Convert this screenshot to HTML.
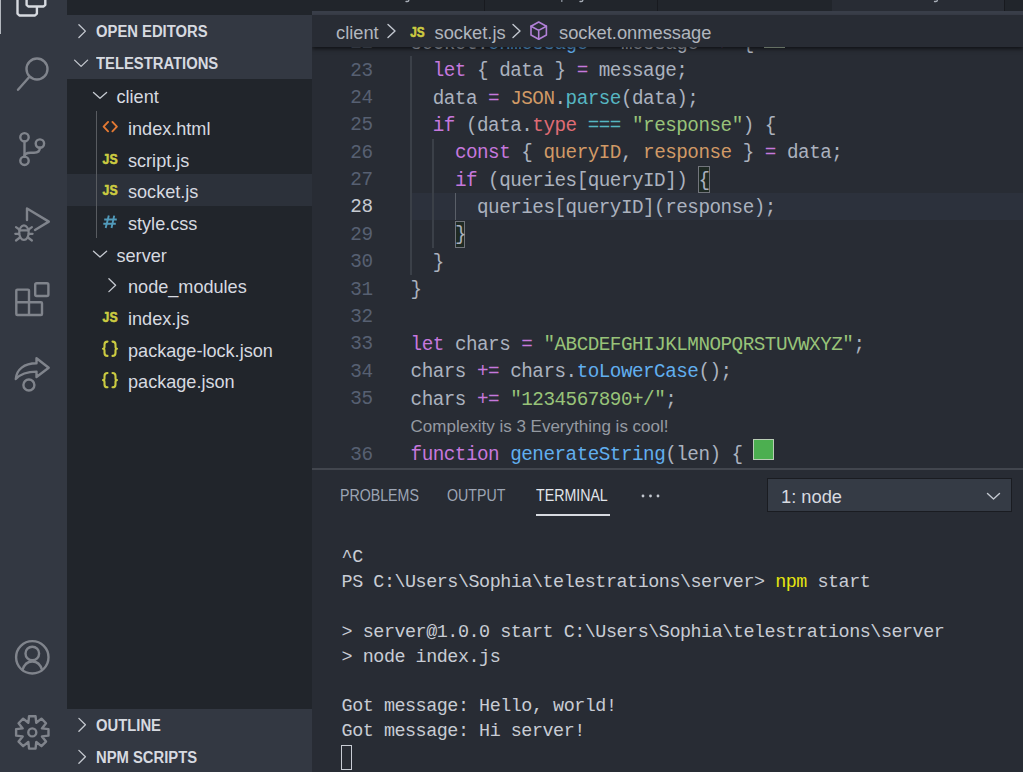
<!DOCTYPE html>
<html><head><meta charset="utf-8">
<style>
*{margin:0;padding:0;box-sizing:border-box}
html,body{width:1023px;height:772px;overflow:hidden;background:#282c34}
body{position:relative;font-family:"Liberation Sans",sans-serif}
.abs{position:absolute}
svg{position:absolute;overflow:visible}
#act{left:0;top:0;width:67px;height:772px;background:#333842}
#side{left:67px;top:0;width:245px;height:772px;background:#21252b}
.hdr{position:absolute;left:0;width:245px;height:32px;background:#333842;color:#d7dae0;font-weight:700;font-size:16px;line-height:32px;white-space:pre}
.hdr .t{position:absolute;left:29px;top:1.4px;transform:scaleX(0.925);transform-origin:0 50%}
.row{position:absolute;left:0;width:245px;height:32px;color:#d7dae0;font-size:18.1px;line-height:32px;white-space:pre}
.row .t{position:absolute;top:1.5px}
#editor{left:312px;top:0;width:711px;height:469px;background:#282c34;overflow:hidden}
#tabs{left:0;top:0;width:711px;height:11px;background:#21252b}
#crumb{left:0;top:15px;width:711px;height:32px;background:#282c34;color:#b1b6be;font-size:18.3px;line-height:32px;white-space:pre;box-shadow:0 2px 4px rgba(0,0,0,.6)}
#crumb span{position:absolute;top:1.8px}
.code{position:absolute;left:0;width:711px;height:27.37px;font-family:"Liberation Mono",monospace;font-size:19.3px;letter-spacing:-0.502px;line-height:27.37px;white-space:pre;color:#abb2bf}
.ln{position:absolute;right:650.5px;text-align:right;color:#576072}
.tx{position:absolute;left:98.6px;top:0.6px}
.lens{position:absolute;left:98.6px;font-size:17px;line-height:27.36px;color:#959aa2;white-space:pre}
.k{color:#c678dd}.s{color:#98c379}.o{color:#d19a66}.c{color:#56b6c2}.r{color:#e06c75}.f{color:#61afef}
.sq{position:absolute;width:20.5px;height:20.5px;background:#4caf50;border:1px solid #b9cdb5;top:-2.9px}
.bm{}
.guide{position:absolute;width:1px;background:#3b4048}
#panel{left:312px;top:468px;width:711px;height:304px;background:#282c34;border-top:2px solid #42464e}
.ptab{position:absolute;top:0;font-size:16.5px;line-height:51px;color:#9da5b4;white-space:pre;transform:scaleX(0.86);transform-origin:0 50%}
.term{position:absolute;left:29.6px;font-family:"Liberation Mono",monospace;font-size:18.4px;letter-spacing:-0.462px;line-height:24.9px;white-space:pre;color:#c8ccd4}
</style></head><body>
<div id="act" class="abs">
  <div class="abs" style="left:0;top:0;width:1px;height:34px;background:#b3b7be"></div>
  <svg width="67" height="772" style="left:0;top:0" fill="none" stroke-linejoin="round" stroke-linecap="round">
    <g stroke="#d7dae0" stroke-width="2.4">
      <path d="M17.5,-8 V13.6 L19.4,15.5 H35 L36.9,13.6 V7.5"/>
      <path d="M26.6,-8 V4.8 L28.3,6.5 H43.6 L45.3,4.8 V-8"/>
    </g>
    <g stroke="#80848c" stroke-width="2.4">
      <circle cx="37" cy="69" r="10.5"/>
      <path d="M29.5,76.8 L18,89.8"/>
      <circle cx="24.5" cy="137.3" r="4.2"/>
      <circle cx="39.9" cy="143.6" r="4.2"/>
      <circle cx="24.5" cy="160.8" r="4.2"/>
      <path d="M24.5,141.5 V156.6"/>
      <path d="M39.9,147.8 C39.9,151.5 37.5,152.8 34,152.8 H30.5 C26.5,152.8 24.5,154 24.5,156.6"/>
      <path d="M27,220 V208.5 L48.8,221.6 L35,230"/>
      <ellipse cx="23.95" cy="232.65" rx="4.7" ry="7.3" stroke-width="2.2"/>
      <path stroke-width="2.2" d="M19.3,230.3 H28.6 M16,227.2 L19.3,229.5 M31.9,227.2 L28.6,229.5 M15.3,233.8 H19.2 M32.6,233.8 H28.7 M16,240.5 L19.3,238 M31.9,240.5 L28.6,238"/>
      <path d="M16.3,290.5 Q16.3,289.6 17.3,289.6 H28 Q29,289.6 29,290.5 V302.3 H41 Q42,302.3 42,303.3 V314 Q42,315 41,315 H17.3 Q16.3,315 16.3,314 Z M16.3,302.3 H29 V315"/>
      <rect x="35.2" y="283.2" width="13.2" height="12.8" rx="1.5"/>
      <path d="M15.8,379 C16.5,369.5 24,363.3 36.5,363.3 V358.2 L48.7,367.8 L36.5,377 V371.6 C27,371.6 20.5,373.8 15.8,379 Z"/>
      <circle cx="28.9" cy="385" r="5.5"/>
      <circle cx="32.3" cy="657.3" r="16.2"/>
      <circle cx="32.3" cy="653.5" r="6.8"/>
      <path d="M22.5,670 Q25,661.5 32.3,661.5 Q39.6,661.5 42.1,670"/>
    </g>
    <g transform="translate(32.3,732.4)" stroke="#80848c" stroke-width="2.4">
      <path d="M-3.23,-16.18 L3.23,-16.18 L3.98,-9.61 L9.15,-13.73 L13.73,-9.15 L9.61,-3.98 L16.18,-3.23 L16.18,3.23 L9.61,3.98 L13.73,9.15 L9.15,13.73 L3.98,9.61 L3.23,16.18 L-3.23,16.18 L-3.98,9.61 L-9.15,13.73 L-13.73,9.15 L-9.61,3.98 L-16.18,3.23 L-16.18,-3.23 L-9.61,-3.98 L-13.73,-9.15 L-9.15,-13.73 L-3.98,-9.61 Z"/>
      <circle cx="0" cy="0" r="4"/>
    </g>
  </svg>
</div>
<div id="side" class="abs">
  <div class="hdr" style="top:15px"><span class="t">OPEN EDITORS</span></div>
  <div class="hdr" style="top:47px"><span class="t">TELESTRATIONS</span></div>
  <div class="row" style="top:79px"><span class="t" style="left:49.5px">client</span></div>
  <div class="row" style="top:111px"><span class="t" style="left:61px">index.html</span></div>
  <div class="row" style="top:143px"><span class="t" style="left:61px">script.js</span></div>
  <div class="row" style="top:174px;background:#2c313a"><span class="t" style="left:61px">socket.js</span></div>
  <div class="row" style="top:206px"><span class="t" style="left:61px">style.css</span></div>
  <div class="row" style="top:238px"><span class="t" style="left:49.5px">server</span></div>
  <div class="row" style="top:269px"><span class="t" style="left:61px">node_modules</span></div>
  <div class="row" style="top:301px"><span class="t" style="left:61px">index.js</span></div>
  <div class="row" style="top:333px"><span class="t" style="left:61px">package-lock.json</span></div>
  <div class="row" style="top:364px"><span class="t" style="left:61px">package.json</span></div>
  <div class="abs" style="left:29px;top:111px;width:1px;height:127px;background:#585b60"></div>
  <div class="hdr" style="top:709px"><span class="t">OUTLINE</span></div>
  <div class="hdr" style="top:741px"><span class="t">NPM SCRIPTS</span></div>
  <svg width="245" height="772" style="left:0;top:0" fill="none" stroke-linecap="round" stroke-linejoin="round">
    <g stroke="#c5c9d0" stroke-width="1.3">
      <path d="M11.9,24.7 L18.4,31.1 L11.9,37.5"/>
      <path d="M7.6,60.1 L14.1,66.4 L20.6,60.1"/>
      <path d="M26.5,92.4 L33,98.2 L39.6,92.4"/>
      <path d="M26.5,251.2 L33,257 L39.6,251.2"/>
      <path d="M41.9,278.8 L48.6,285.2 L41.9,291.6"/>
      <path d="M11.9,718.4 L18.4,724.8 L11.9,731.2"/>
      <path d="M11.9,750.4 L18.4,756.8 L11.9,763.2"/>
    </g>
    <g stroke="#e37933" stroke-width="1.9">
      <path d="M41.1,121.9 L36.6,126.7 L41.1,131.3 M45.4,121.9 L49.9,126.7 L45.4,131.3"/>
    </g>
    <g stroke="#519aba" stroke-width="1.9" stroke-linecap="butt">
      <path d="M41.8,215.6 L38.7,228 M47.2,215.6 L44.5,228 M37.2,219.5 H49.8 M36.3,223.8 H48.8"/>
    </g>
    <g stroke="#cbcb41" stroke-width="2.1">
      <path d="M40.5,341.6 Q37.5,341.6 37.5,344.5 V346.8 Q37.5,348.7 36,348.7 Q37.5,348.7 37.5,350.6 V353 Q37.5,355.9 40.5,355.9 M45.5,341.6 Q48.5,341.6 48.5,344.5 V346.8 Q48.5,348.7 50,348.7 Q48.5,348.7 48.5,350.6 V353 Q48.5,355.9 45.5,355.9"/>
      <path d="M40.5,373 Q37.5,373 37.5,375.9 V378.2 Q37.5,380.1 36,380.1 Q37.5,380.1 37.5,382 V384.4 Q37.5,387.3 40.5,387.3 M45.5,373 Q48.5,373 48.5,375.9 V378.2 Q48.5,380.1 50,380.1 Q48.5,380.1 48.5,382 V384.4 Q48.5,387.3 45.5,387.3"/>
    </g>
    <g fill="#cbcb41" stroke="#cbcb41" stroke-width="0.6" font-family="Liberation Sans" font-weight="700" font-size="15.4">
      <text x="35.6" y="163.6" textLength="15" lengthAdjust="spacingAndGlyphs">JS</text>
      <text x="35.6" y="194.8" textLength="15" lengthAdjust="spacingAndGlyphs">JS</text>
      <text x="35.6" y="322.4" textLength="15" lengthAdjust="spacingAndGlyphs">JS</text>
    </g>
  </svg>
</div>
<div id="editor" class="abs">
  <div id="tabs" class="abs">
    <div class="abs" style="left:172px;top:0;width:1px;height:11px;background:#181a1f"></div>
    <div class="abs" style="left:345px;top:0;width:1px;height:11px;background:#181a1f"></div>
    <div class="abs" style="left:520px;top:0;width:172px;height:11px;background:#282c34"></div>
    <div class="abs" style="left:692px;top:0;width:1px;height:11px;background:#181a1f"></div>
    <svg width="711" height="11" style="left:0;top:0" fill="none" stroke="#a9afb8" stroke-width="1.3" stroke-linecap="round">
      <path d="M96.8,-2 V0.2 Q96.8,1.5 95.2,1.5 H94"/>
      <path d="M249.8,-2 V1.4" stroke="#8f96a0"/>
      <path d="M270.8,-2 V0.2 Q270.8,1.5 269.2,1.5 H268"/>
      <path d="M625.3,-2 V0.2 Q625.3,1.5 623.7,1.5 H622.5"/>
    </svg>
  </div>
  <div class="abs" style="left:0;top:11px;width:711px;height:4px;background:#3a3f4a"></div>
  <div class="abs" style="left:99px;top:192.6px;width:612px;height:27.4px;background:#2c313c"></div>
  <div class="abs" style="left:386.3px;top:165.6px;width:11.5px;height:27.2px;background:#1f2a24;border:1.5px solid #72757c"></div>
  <div class="abs" style="left:142.9px;top:220.8px;width:10.6px;height:27px;background:#1f2a24;border:1.5px solid #72757c"></div>
  <div class="guide" style="left:98.4px;width:1.5px;top:56px;height:219px"></div>
  <div class="guide" style="left:120.4px;width:1.5px;top:138.5px;height:109.5px"></div>
  <div class="guide" style="left:142.6px;width:1.5px;top:192.6px;height:27.4px;background:#5a5f68"></div>
  <div class="code" style="top:30.17px;"><span class="ln">22</span><span class="tx">socket.<span class="f">onmessage</span> <span class="k">=</span> message <span class="k">=&gt;</span> { <span class="sq" style="left:353.8px"></span></span></div>
  <div class="code" style="top:57.54px;"><span class="ln">23</span><span class="tx">  <span class="k">let</span> { data } <span class="k">=</span> message;</span></div>
  <div class="code" style="top:84.91px;"><span class="ln">24</span><span class="tx">  data <span class="k">=</span> <span class="o">JSON</span>.<span class="c">parse</span>(data);</span></div>
  <div class="code" style="top:112.28px;"><span class="ln">25</span><span class="tx">  <span class="k">if</span> (data.<span class="r">type</span> <span class="c">===</span> <span class="s">"response"</span>) {</span></div>
  <div class="code" style="top:139.65px;"><span class="ln">26</span><span class="tx">    <span class="k">const</span> { <span class="o">queryID</span>, <span class="o">response</span> } <span class="k">=</span> data;</span></div>
  <div class="code" style="top:167.02px;"><span class="ln">27</span><span class="tx">    <span class="k">if</span> (queries[queryID]) <span class="bm">{</span></span></div>
  <div class="code" style="top:194.39px;"><span class="ln" style="color:#c6cad2">28</span><span class="tx">      queries[queryID](response);</span></div>
  <div class="code" style="top:221.76px;"><span class="ln">29</span><span class="tx">    <span class="bm">}</span></span></div>
  <div class="code" style="top:249.13px;"><span class="ln">30</span><span class="tx">  }</span></div>
  <div class="code" style="top:276.50px;"><span class="ln">31</span><span class="tx">}</span></div>
  <div class="code" style="top:303.87px;"><span class="ln">32</span><span class="tx"></span></div>
  <div class="code" style="top:331.24px;"><span class="ln">33</span><span class="tx"><span class="k">let</span> chars <span class="k">=</span> <span class="s">"ABCDEFGHIJKLMNOPQRSTUVWXYZ"</span>;</span></div>
  <div class="code" style="top:358.61px;"><span class="ln">34</span><span class="tx">chars <span class="k">+=</span> chars.<span class="f">toLowerCase</span>();</span></div>
  <div class="code" style="top:385.98px;"><span class="ln">35</span><span class="tx">chars <span class="k">+=</span> <span class="s">"1234567890+/"</span>;</span></div>
  <div class="lens" style="top:412.95px">Complexity is 3 Everything is cool!</div>
  <div class="code" style="top:441.62px;"><span class="ln">36</span><span class="tx"><span class="k">function</span> <span class="f">generateString</span>(len) { <span class="sq" style="left:342.7px"></span></span></div>

  <div id="crumb" class="abs">
    <span style="left:24px">client</span>
    <span style="left:122.5px">socket.js</span>
    <span style="left:247px">socket.onmessage</span>
  </div>
  <svg width="711" height="60" style="left:0;top:0" fill="none" stroke-linecap="round" stroke-linejoin="round">
    <path d="M76,24.5 L83,31 L76,37.5" stroke="#c3c8d0" stroke-width="1.4"/>
    <path d="M201,24.5 L208,31 L201,37.5" stroke="#c3c8d0" stroke-width="1.4"/>
    <text x="98.2" y="36.6" textLength="14.4" lengthAdjust="spacingAndGlyphs" fill="#cbcb41" stroke="#cbcb41" stroke-width="0.6" font-family="Liberation Sans" font-weight="700" font-size="15.2">JS</text>
    <g stroke="#b180d7" stroke-width="1.6">
      <path d="M219,26.2 L226.7,22 L234.4,26.2 V35 L226.7,39.2 L219,35 Z"/>
      <path d="M219,26.2 L226.7,30.4 L234.4,26.2 M226.7,30.4 V39.2"/>
    </g>
  </svg>
</div>
<div id="panel" class="abs">
  <span class="ptab" style="left:28.3px">PROBLEMS</span>
  <span class="ptab" style="left:135px">OUTPUT</span>
  <span class="ptab" style="left:224px;color:#e2e5ea">TERMINAL</span>
  <div class="abs" style="left:223.5px;top:44px;width:74px;height:2px;background:#d7dae0"></div>
  <svg width="711" height="60" style="left:0;top:0" fill="#c3c8d0"><circle cx="331" cy="26" r="1.4"/><circle cx="338.5" cy="26" r="1.4"/><circle cx="346" cy="26" r="1.4"/>
  <path d="M675.5,23.5 L681.5,29 L687.5,23.5" fill="none" stroke="#c3c8d0" stroke-width="1.4" stroke-linecap="round" stroke-linejoin="round"/></svg>
  <div class="abs" style="left:455px;top:8.2px;width:244.5px;height:33.8px;background:#353b45;border:1.7px solid #1a1c21"></div>
  <span class="ptab" style="left:469px;color:#d7dae0;font-size:18.3px;transform:none;top:0.5px">1: node</span>
  <svg width="711" height="60" style="left:0;top:0"><path d="M675.5,23.5 L681.5,29 L687.5,23.5" fill="none" stroke="#c3c8d0" stroke-width="1.4" stroke-linecap="round" stroke-linejoin="round"/></svg>
  <div class="term" style="top:75.91px">^C</div>
  <div class="term" style="top:100.81px">PS C:\Users\Sophia\telestrations\server&gt; <span style="color:#e5e510">npm</span> start</div>
  <div class="term" style="top:150.61px">&gt; server@1.0.0 start C:\Users\Sophia\telestrations\server</div>
  <div class="term" style="top:175.51px">&gt; node index.js</div>
  <div class="term" style="top:225.31px">Got message: Hello, world!</div>
  <div class="term" style="top:250.21px">Got message: Hi server!</div>

  <div class="abs" style="left:29.2px;top:274.7px;width:10.6px;height:25px;border:1.5px solid #c8ccd4"></div>
</div>
</body></html>
